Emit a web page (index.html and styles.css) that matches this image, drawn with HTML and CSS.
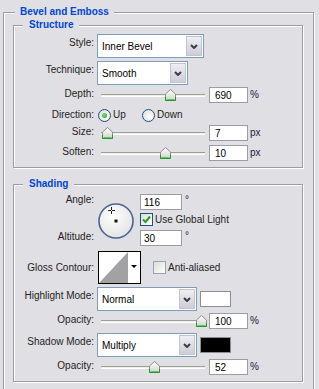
FILE: index.html
```html
<!DOCTYPE html>
<html>
<head lang="en">
    <meta charset="UTF-8">
    <title>Bevel and Emboss</title>
    <link rel="stylesheet" href="styles.css">
</head>
<body>
    <svg class="defs" width="0" height="0">
        <defs>
            <linearGradient id="tg" x1="0" y1="0" x2="0" y2="1">
                <stop offset="0" stop-color="#ffffff"/>
                <stop offset="1" stop-color="#d2d2cc"/>
            </linearGradient>
            <radialGradient id="dg" cx="0.4" cy="0.35" r="0.7">
                <stop offset="0" stop-color="#ffffff"/>
                <stop offset="1" stop-color="#e2e2e4"/>
            </radialGradient>
            <symbol id="thumb" viewBox="0 0 11 12">
                <path d="M5.5 0.5L10.5 5V11.5H0.5V5Z" fill="url(#tg)" stroke="#8e8e8e"/>
                <path d="M0.5 8V11.5H10.5V8" fill="none" stroke="#1f9a2a"/>
                <path d="M1.5 10.5H9.5" stroke="#62c46a"/>
            </symbol>
            <symbol id="chev" viewBox="0 0 8 5">
                <path d="M1 1L4 4L7 1" fill="none" stroke="#3d3d40" stroke-width="2"/>
            </symbol>
            <symbol id="tick" viewBox="0 0 11 11">
                <path d="M2 5.5L4.5 8L9 2.5" fill="none" stroke="#21a121" stroke-width="2"/>
            </symbol>
        </defs>
    </svg>

    <div class="group outer">
        <span class="legend">Bevel and Emboss</span>

        <div class="group sub structure">
            <span class="legend">Structure</span>

            <div class="row tall r-style">
                <span class="lbl">Style:</span>
                <div class="select s-style"><span class="val">Inner Bevel</span><span class="btn"><svg class="chev"><use href="#chev"/></svg></span></div>
            </div>
            <div class="row tall r-tech">
                <span class="lbl">Technique:</span>
                <div class="select s-tech"><span class="val">Smooth</span><span class="btn"><svg class="chev"><use href="#chev"/></svg></span></div>
            </div>
            <div class="row r-depth">
                <span class="lbl">Depth:</span>
                <div class="slider"><div class="track"></div><svg class="thumb" style="left:64px"><use href="#thumb"/></svg></div>
                <span class="num">690</span><span class="unit">%</span>
            </div>
            <div class="row r-dir">
                <span class="lbl">Direction:</span>
                <div class="opt first"><span class="radio on"></span><span class="opt-text">Up</span></div>
                <div class="opt"><span class="radio"></span><span class="opt-text">Down</span></div>
            </div>
            <div class="row r-size">
                <span class="lbl">Size:</span>
                <div class="slider"><div class="track"></div><svg class="thumb" style="left:1px"><use href="#thumb"/></svg></div>
                <span class="num">7</span><span class="unit">px</span>
            </div>
            <div class="row r-soften">
                <span class="lbl">Soften:</span>
                <div class="slider"><div class="track"></div><svg class="thumb" style="left:59px"><use href="#thumb"/></svg></div>
                <span class="num">10</span><span class="unit">px</span>
            </div>
        </div>

        <div class="group sub shading">
            <span class="legend">Shading</span>

            <div class="angle">
                <div class="lbl-col">
                    <div class="lbl">Angle:</div>
                    <div class="lbl alt">Altitude:</div>
                </div>
                <svg class="dial" viewBox="0 0 36 36">
                    <circle cx="18" cy="18" r="17" fill="url(#dg)" stroke="#4b6592" stroke-width="1.6"/>
                    <rect x="16.5" y="16.5" width="3" height="3" fill="#111"/>
                    <path d="M13.5 4V7M13.5 8V11M10 7.5H13M14 7.5H17" stroke="#222" stroke-width="1"/>
                </svg>
                <div class="angle-r">
                    <div class="line"><span class="num sm">116</span><span class="deg">°</span></div>
                    <div class="line chk-line"><span class="check"><svg class="tick"><use href="#tick"/></svg></span><span class="chk-text">Use Global Light</span></div>
                    <div class="line alt-line"><span class="num sm">30</span><span class="deg">°</span></div>
                </div>
            </div>

            <div class="row gloss">
                <span class="lbl mid">Gloss Contour:</span>
                <svg class="contour" viewBox="0 0 43 33">
                    <rect x="0.5" y="0.5" width="42" height="32" fill="#fff" stroke="#000"/>
                    <path d="M1 32L30 1V32Z" fill="#a2a2a4"/>
                    <path d="M33 14H39L36 17Z" fill="#000"/>
                </svg>
                <span class="check off"></span><span class="chk-text">Anti-aliased</span>
            </div>

            <div class="row tall r-hmode">
                <span class="lbl">Highlight Mode:</span>
                <div class="select s-mode"><span class="val">Normal</span><span class="btn"><svg class="chev"><use href="#chev"/></svg></span></div>
                <span class="swatch white"></span>
            </div>
            <div class="row r-op1">
                <span class="lbl">Opacity:</span>
                <div class="slider"><div class="track"></div><svg class="thumb" style="left:95px"><use href="#thumb"/></svg></div>
                <span class="num">100</span><span class="unit">%</span>
            </div>
            <div class="row tall r-smode">
                <span class="lbl">Shadow Mode:</span>
                <div class="select s-mode"><span class="val">Multiply</span><span class="btn"><svg class="chev"><use href="#chev"/></svg></span></div>
                <span class="swatch black"></span>
            </div>
            <div class="row r-op2">
                <span class="lbl">Opacity:</span>
                <div class="slider"><div class="track"></div><svg class="thumb" style="left:48px"><use href="#thumb"/></svg></div>
                <span class="num">52</span><span class="unit">%</span>
            </div>
        </div>
    </div>
</body>
</html>
```

FILE: styles.css
```css
*{margin:0;padding:0;box-sizing:border-box}
body{background:#e0dfe3;font:10px/12px "Liberation Sans",Arial,sans-serif;color:#1e1e22;overflow:hidden}
.defs{display:block;width:0;height:0}

/* etched group boxes */
.group{position:relative;border:1px solid #9d9da1;box-shadow:inset 1px 1px 0 #fff,1px 1px 0 #fff}
.outer{margin:12px 0 0 3px;width:311px;padding:12px 0 20px 9px}
.sub{width:290px}
.structure{padding-bottom:6px}
.shading{margin-top:16px;padding-bottom:6px}
.legend{position:absolute;top:-7px;left:9px;padding:0 6px;background:#e0dfe3;color:#0046d5;font-weight:bold}
.outer>.legend{left:11px;padding:0 5px}

/* rows */
.row{display:flex;align-items:center;height:16px}
.row.tall{height:24px}
.lbl{flex:none;width:80px;text-align:right;align-self:flex-start;padding-top:1px}
.tall .lbl{padding-top:3px}
.lbl.mid{align-self:center;padding-top:1px}
.r-style{margin-top:8px}
.r-tech{margin-top:3px}
.r-depth{margin-top:2px}
.r-dir{margin-top:5px;height:14px}
.r-size{margin-top:3px}
.r-soften{margin-top:4px}

/* dropdowns */
.select{display:flex;height:24px;margin-left:3px;border:1px solid #7f9db9;background:#fff;padding:1px}
.s-style{width:107px}
.s-tech{width:91px}
.s-mode{width:100px}
.select .val{flex:1;padding:1px 0 0 3px;line-height:20px;color:#000}
.btn{width:16px;display:flex;align-items:center;justify-content:center;border:1px solid #c4c4d0;background:linear-gradient(#eeeef3,#cdcdd8)}
.chev{width:8px;height:5px}

/* sliders */
.slider{position:relative;width:104px;height:16px;margin-left:7px;padding-top:7px}
.track{height:3px;border-top:1px solid #9c9c9c;border-bottom:1px solid #fff;background:#f2f0e2}
.thumb{position:absolute;top:2px;width:11px;height:12px}

/* text fields */
.num{width:39px;height:16px;margin-left:4px;border:1px solid #9c9ca4;background:#fff;padding:1px 0 0 5px;line-height:13px;color:#000}
.num.sm{width:42px;margin-left:0;padding-left:3px}
.unit{margin-left:2px;color:#1c2040}
.deg{margin-left:3px;align-self:flex-start}

/* radios and checkboxes */
.opt{display:flex;align-items:center}
.opt.first{width:44px;margin-left:4px}
.opt-text{margin-left:2px}
.radio{width:13px;height:13px;border-radius:50%;border:1px solid #1f4f7e;background:radial-gradient(circle at 60% 60%,#fff,#d8d8d2);display:flex;align-items:center;justify-content:center}
.radio.on::after{content:"";width:5px;height:5px;border-radius:50%;background:radial-gradient(circle at 40% 40%,#7ee07e,#1e9a1e)}
.check{flex:none;width:13px;height:13px;border:1px solid #1f4f7e;background:linear-gradient(135deg,#dcdcd6,#fff);display:flex;align-items:center;justify-content:center}
.check.off{margin-left:12px;border-color:#8fa4bd}
.tick{width:11px;height:11px}
.chk-text{margin-left:2px}

/* angle block */
.angle{display:flex;align-items:flex-start;margin-top:9px;height:52px}
.lbl-col{flex:none;width:80px}
.lbl-col .lbl{padding-top:0}
.lbl-col .alt{margin-top:25px}
.dial{flex:none;width:36px;height:36px;margin:9px 0 0 4px}
.angle-r{margin-left:6px}
.line{display:flex;align-items:center;height:16px}
.chk-line{height:13px;margin-top:3px}
.alt-line{margin-top:4px}

/* contour and colour swatches */
.gloss{height:33px;margin-top:5px}
.contour{flex:none;width:43px;height:33px;margin-left:4px}
.r-hmode{margin-top:3px}
.r-op1{margin-top:2px}
.r-smode{margin-top:4px}
.r-op2{margin-top:2px}
.swatch{width:31px;height:16px;margin-left:3px;border:1px solid #8d8d94}
.white{background:#fff}
.black{background:#000}
```
